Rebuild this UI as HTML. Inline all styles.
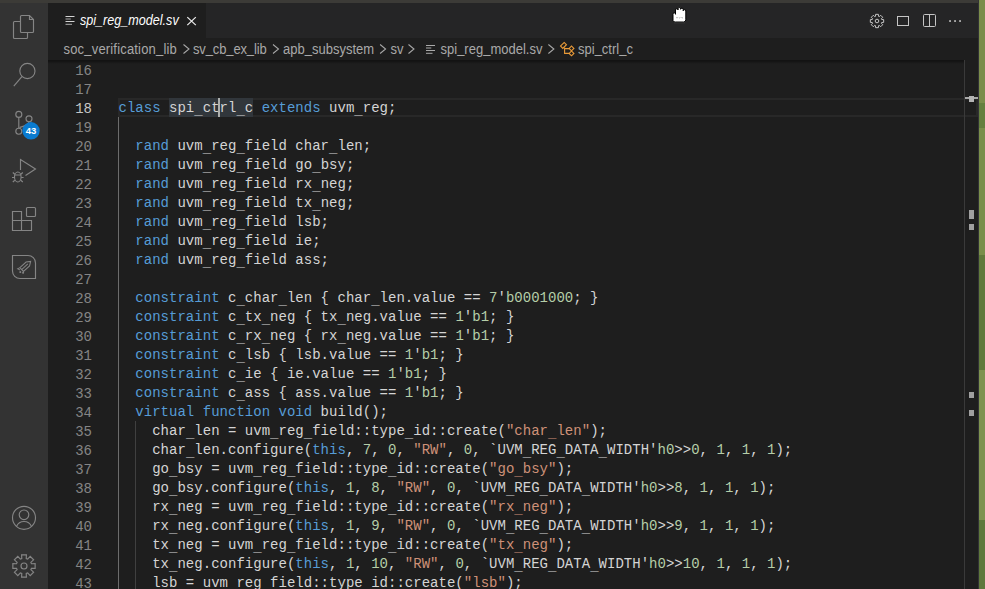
<!DOCTYPE html>
<html><head><meta charset="utf-8">
<style>
*{margin:0;padding:0;box-sizing:border-box}
html,body{width:985px;height:589px;overflow:hidden;background:#7b8f4a}
#green{left:979px;top:0;width:6px;height:589px;background:linear-gradient(#7b8d4b 0,#7b8d4b 103px,#65803f 103px,#65803f 128px,#7a8f4b 128px,#7a8f4b 255px,#617a3c 255px,#617a3c 370px,#7e9350 370px,#7e9350 520px,#5f783c 520px)}
body{position:relative;font-family:"Liberation Sans",sans-serif}
.abs{position:absolute}
#topstrip{left:0;top:0;width:978px;height:3px;background:#3c3b37}
#win{left:0;top:3px;width:979px;height:586px;background:#1e1e1e;overflow:hidden}
#winborder{left:978px;top:0;width:1px;height:589px;background:#323236}
#act{left:0;top:0;width:48px;height:586px;background:#333333}
#tabs{left:48px;top:0;width:930px;height:35px;background:#252526}
#tab{left:0;top:0;width:158px;height:35px;background:#1e1e1e}
#crumbs{left:48px;top:35px;width:930px;height:22px;background:#1e1e1e;color:#a9a9a9;font-size:13px}
#editor{left:48px;top:57px;width:930px;height:529px;background:#1e1e1e}
#shadow{left:0;top:0;width:916px;height:4px;background:linear-gradient(#121212 0px,#151515 1.5px,#1b1b1b 3px,#1e1e1e 4px);}
.ln{position:absolute;margin-top:1.5px;left:1px;width:43px;text-align:right;height:19px;line-height:19px;font-family:"Liberation Mono",monospace;font-size:14px;color:#858585}
.ln.cur{color:#c6c6c6}
.ln{transform:scaleY(1.1);transform-origin:0 14px}
.cl{position:absolute;margin-top:1px;left:70.5px;letter-spacing:0.02px;height:19px;line-height:19px;font-family:"Liberation Mono",monospace;font-size:14px;color:#d4d4d4;white-space:pre}
.cr{top:0px;line-height:23px;white-space:pre;font-size:13px;transform:scaleY(1.1);transform-origin:0 17px}
.u{font-style:normal;position:relative;top:2px}
.uc{font-style:normal;position:relative;top:-1px}
.k{color:#569cd6}.n{color:#b5cea8}.s{color:#ce9178}
.hl{}
#curline{left:70px;top:38px;width:860px;height:19px;border:2px solid #282828}
#cursor{left:170px;top:38px;width:2px;height:19px;background:#aeafad}
#guide1{left:70px;top:57px;width:1px;height:480px;background:#6c6c6c}
#guide2{left:87px;top:361px;width:1px;height:200px;background:#404040}
#ruler{left:916px;top:0;width:1px;height:529px;background:#3a3a3a}
.mk{position:absolute;left:921px;width:5px;background:#a0a0a0}
</style></head><body>
<div id="green" class="abs"></div>
<div id="topstrip" class="abs"></div>
<div id="win" class="abs">
  <div id="act" class="abs">
  <svg class="abs" style="left:0;top:-3px" width="48" height="589" viewBox="0 0 48 589" fill="none" stroke="#858585" stroke-width="1.15">
<path d="M21.5,15.5 H29.5 L33.5,19.5 V31.5 Q33.5,32.5 32.5,32.5 H21.5 Q20.5,32.5 20.5,31.5 V16.5 Q20.5,15.5 21.5,15.5 Z"/>
<path d="M29.5,15.5 V19.5 H33.5"/>
<path d="M20,21.5 H14.5 Q13.5,21.5 13.5,22.5 V37.5 Q13.5,38.5 14.5,38.5 H26.5 Q27.5,38.5 27.5,37.5 V33"/>
<circle cx="27.4" cy="71" r="7.6"/>
<path d="M21.9,76.6 L13.8,86.2"/>
<circle cx="18.8" cy="114.4" r="3"/>
<circle cx="29" cy="118.8" r="3"/>
<circle cx="18.8" cy="131.2" r="3"/>
<path d="M18.8,117.4 V128.2"/>
<path d="M29,121.8 C29,125 25,126 19.5,127.5"/>
<path d="M20.5,170 V159.5 L35.5,169 L25.5,175.5"/>
<ellipse cx="17.8" cy="177" rx="3.3" ry="5"/>
<path d="M14.6,175 H21 M12.8,172.5 L14.8,174.3 M22.8,172.5 L20.8,174.3 M12,177.5 H14.5 M21.1,177.5 H23.6 M12.8,182 L14.8,180.3 M22.8,182 L20.8,180.3"/>
<path d="M12.5,211.5 H21.5 V220.5 H31.5 V230.5 H12.5 Z M12.5,220.5 H21.5 M21.5,220.5 V230.5"/>
<rect x="26.5" y="207.5" width="9" height="9" rx="1"/>
<path d="M12.5,255.5 H28 A7.5,7.5 0 0 1 35.5,263 V278.5 H20 A7.5,7.5 0 0 1 12.5,271 Z"/>
<g transform="translate(25,266.5) rotate(-42)" stroke-width="1"><path d="M-4.5,-2.6 H3.8 L7.6,0 L3.8,2.6 H-4.5 Z M-4.5,0 H3.8 M-4.5,-2.6 L-7,-3.2 L-6,-0.5"/><circle cx="-7.2" cy="1" r="1" fill="#858585" stroke="none"/><circle cx="-5.6" cy="3.4" r="1" fill="#858585" stroke="none"/></g>
<circle cx="24" cy="517.8" r="11.5"/>
<circle cx="24" cy="514.8" r="4.8"/>
<path d="M16.5,526.5 C18,523 21,521.5 24,521.5 C27,521.5 30,523 31.5,526.5"/>
<path d="M21.77,558.53 L21.60,554.86 L26.40,554.86 L26.23,558.53 L27.70,559.14 L30.18,556.42 L33.58,559.82 L30.86,562.30 L31.47,563.77 L35.14,563.60 L35.14,568.40 L31.47,568.23 L30.86,569.70 L33.58,572.18 L30.18,575.58 L27.70,572.86 L26.23,573.47 L26.40,577.14 L21.60,577.14 L21.77,573.47 L20.30,572.86 L17.82,575.58 L14.42,572.18 L17.14,569.70 L16.53,568.23 L12.86,568.40 L12.86,563.60 L16.53,563.77 L17.14,562.30 L14.42,559.82 L17.82,556.42 L20.30,559.14 Z"/>
<circle cx="24" cy="566" r="3"/>
</svg>
<svg class="abs" style="left:0;top:-3px" width="48" height="589" viewBox="0 0 48 589">
<circle cx="31" cy="130.8" r="8.7" fill="#0a7bd0"/>
<text x="31" y="134.3" font-family="Liberation Sans" font-weight="bold" font-size="9.5" fill="#fff" text-anchor="middle">43</text>
</svg>
  </div>
  <div id="tabs" class="abs">
    <div id="tab" class="abs"><svg class="abs" style="left:0;top:0" width="158" height="34" viewBox="48 3 158 34">
<rect x="65.5" y="16" width="9" height="1" fill="#d4d4d4"/>
<rect x="65.5" y="18.5" width="5.3" height="1" fill="#a8a8a8"/>
<rect x="65.5" y="21" width="9" height="1" fill="#d4d4d4"/>
<rect x="65.5" y="23.8" width="6.5" height="1" fill="#b0b0b0"/>
<path d="M187.3,17.1 L195.8,25.1 M195.8,17.1 L187.3,25.1" stroke="#ececec" stroke-width="1.25"/>
</svg>
<div class="abs" style="left:32px;top:9.7px;font-style:italic;font-size:12.6px;color:#ffffff;line-height:17px;white-space:pre;transform:scaleY(1.12);transform-origin:0 13px">spi_reg_model.sv</div></div>
    <svg class="abs" style="left:0;top:0" width="930" height="34" viewBox="48 3 930 34" fill="none" stroke="#c5c5c5" stroke-width="1">
<path d="M875.49,16.34 L875.62,14.34 L878.38,14.34 L878.51,16.34 L879.22,16.63 L880.73,15.32 L882.68,17.27 L881.37,18.78 L881.66,19.49 L883.66,19.62 L883.66,22.38 L881.66,22.51 L881.37,23.22 L882.68,24.73 L880.73,26.68 L879.22,25.37 L878.51,25.66 L878.38,27.66 L875.62,27.66 L875.49,25.66 L874.78,25.37 L873.27,26.68 L871.32,24.73 L872.63,23.22 L872.34,22.51 L870.34,22.38 L870.34,19.62 L872.34,19.49 L872.63,18.78 L871.32,17.27 L873.27,15.32 L874.78,16.63 Z" stroke-linejoin="round"/>
<circle cx="877" cy="21" r="1.8"/>
<rect x="897.5" y="16.5" width="11" height="9"/>
<rect x="923.5" y="14.5" width="12" height="12" rx="1"/>
<path d="M929.5,14.5 V26.5"/>
<g fill="#c5c5c5" stroke="none"><rect x="949.2" y="20.2" width="1.7" height="1.7"/><rect x="954.2" y="20.2" width="1.7" height="1.7"/><rect x="959.2" y="20.2" width="1.7" height="1.7"/></g>
</svg>
  </div>
  <div id="crumbs" class="abs"><svg class="abs" style="left:0;top:0" width="930" height="22" viewBox="48 38 930 22" fill="none" stroke="#a8a8a8" stroke-width="1.05"><path d="M183.5,44.5 L189.0,49 L183.5,53.5"/><path d="M273.0,44.5 L278.5,49 L273.0,53.5"/><path d="M380.1,44.5 L385.6,49 L380.1,53.5"/><path d="M408.5,44.5 L414.0,49 L408.5,53.5"/><path d="M548.4,44.5 L553.9,49 L548.4,53.5"/>

<g fill="#a9a9a9" stroke="none"><rect x="426" y="45" width="9" height="1"/><rect x="426" y="47.5" width="5.3" height="1"/><rect x="426" y="50" width="9" height="1"/><rect x="426" y="52.8" width="6.5" height="1"/></g>
<g stroke="#e99a38" stroke-width="1.1" fill="none"><rect x="-2.6" y="-1.6" width="5.2" height="3.2" transform="translate(563.5,45.4) rotate(-45)"/><rect x="-1.7" y="-1.7" width="3.4" height="3.4" transform="translate(571.5,48.4) rotate(45)"/><rect x="-1.7" y="-1.7" width="3.4" height="3.4" transform="translate(571.5,53.4) rotate(45)"/><path d="M564.6,48.6 H569.2 M564.6,47.5 V53.4 H569.2"/></g>
</svg>
<span class="abs cr" style="left:15.5px;letter-spacing:0.18px">soc<i class="uc">_</i>verification<i class="uc">_</i>lib</span>
<span class="abs cr" style="left:145px;letter-spacing:-0.14px">sv<i class="uc">_</i>cb<i class="uc">_</i>ex<i class="uc">_</i>lib</span>
<span class="abs cr" style="left:235px">apb<i class="uc">_</i>subsystem</span>
<span class="abs cr" style="left:342.5px">sv</span>
<span class="abs cr" style="left:392.5px">spi<i class="uc">_</i>reg<i class="uc">_</i>model.sv</span>
<span class="abs cr" style="left:530px">spi<i class="uc">_</i>ctrl<i class="uc">_</i>c</span></div>
  <div id="editor" class="abs">
    <div id="curline" class="abs"></div>
    <div class="abs" style="left:121px;top:38px;width:84px;height:19px;background:#31363b"></div>
    <div id="guide1" class="abs"></div>
    <div id="guide2" class="abs"></div>
    <div class="ln" style="top:0px">16</div>
<div class="cl" style="top:0px"></div>
<div class="ln" style="top:19px">17</div>
<div class="cl" style="top:19px"></div>
<div class="ln cur" style="top:38px">18</div>
<div class="cl" style="top:38px"><span class="k">class</span> <span class="hl">spi<i class="u">_</i>ctrl<i class="u">_</i>c</span> <span class="k">extends</span> uvm<i class="u">_</i>reg;</div>
<div class="ln" style="top:57px">19</div>
<div class="cl" style="top:57px"></div>
<div class="ln" style="top:76px">20</div>
<div class="cl" style="top:76px">  <span class="k">rand</span> uvm<i class="u">_</i>reg<i class="u">_</i>field char<i class="u">_</i>len;</div>
<div class="ln" style="top:95px">21</div>
<div class="cl" style="top:95px">  <span class="k">rand</span> uvm<i class="u">_</i>reg<i class="u">_</i>field go<i class="u">_</i>bsy;</div>
<div class="ln" style="top:114px">22</div>
<div class="cl" style="top:114px">  <span class="k">rand</span> uvm<i class="u">_</i>reg<i class="u">_</i>field rx<i class="u">_</i>neg;</div>
<div class="ln" style="top:133px">23</div>
<div class="cl" style="top:133px">  <span class="k">rand</span> uvm<i class="u">_</i>reg<i class="u">_</i>field tx<i class="u">_</i>neg;</div>
<div class="ln" style="top:152px">24</div>
<div class="cl" style="top:152px">  <span class="k">rand</span> uvm<i class="u">_</i>reg<i class="u">_</i>field lsb;</div>
<div class="ln" style="top:171px">25</div>
<div class="cl" style="top:171px">  <span class="k">rand</span> uvm<i class="u">_</i>reg<i class="u">_</i>field ie;</div>
<div class="ln" style="top:190px">26</div>
<div class="cl" style="top:190px">  <span class="k">rand</span> uvm<i class="u">_</i>reg<i class="u">_</i>field ass;</div>
<div class="ln" style="top:209px">27</div>
<div class="cl" style="top:209px"></div>
<div class="ln" style="top:228px">28</div>
<div class="cl" style="top:228px">  <span class="k">constraint</span> c<i class="u">_</i>char<i class="u">_</i>len { char<i class="u">_</i>len.value == <span class="n">7</span>&#x27;<span class="n">b0001000</span>; }</div>
<div class="ln" style="top:247px">29</div>
<div class="cl" style="top:247px">  <span class="k">constraint</span> c<i class="u">_</i>tx<i class="u">_</i>neg { tx<i class="u">_</i>neg.value == <span class="n">1</span>&#x27;<span class="n">b1</span>; }</div>
<div class="ln" style="top:266px">30</div>
<div class="cl" style="top:266px">  <span class="k">constraint</span> c<i class="u">_</i>rx<i class="u">_</i>neg { rx<i class="u">_</i>neg.value == <span class="n">1</span>&#x27;<span class="n">b1</span>; }</div>
<div class="ln" style="top:285px">31</div>
<div class="cl" style="top:285px">  <span class="k">constraint</span> c<i class="u">_</i>lsb { lsb.value == <span class="n">1</span>&#x27;<span class="n">b1</span>; }</div>
<div class="ln" style="top:304px">32</div>
<div class="cl" style="top:304px">  <span class="k">constraint</span> c<i class="u">_</i>ie { ie.value == <span class="n">1</span>&#x27;<span class="n">b1</span>; }</div>
<div class="ln" style="top:323px">33</div>
<div class="cl" style="top:323px">  <span class="k">constraint</span> c<i class="u">_</i>ass { ass.value == <span class="n">1</span>&#x27;<span class="n">b1</span>; }</div>
<div class="ln" style="top:342px">34</div>
<div class="cl" style="top:342px">  <span class="k">virtual</span> <span class="k">function</span> <span class="k">void</span> build();</div>
<div class="ln" style="top:361px">35</div>
<div class="cl" style="top:361px">    char<i class="u">_</i>len = uvm<i class="u">_</i>reg<i class="u">_</i>field::type<i class="u">_</i>id::create(<span class="s">&quot;char<i class="u">_</i>len&quot;</span>);</div>
<div class="ln" style="top:380px">36</div>
<div class="cl" style="top:380px">    char<i class="u">_</i>len.configure(<span class="k">this</span>, <span class="n">7</span>, <span class="n">0</span>, <span class="s">&quot;RW&quot;</span>, <span class="n">0</span>, `UVM<i class="u">_</i>REG<i class="u">_</i>DATA<i class="u">_</i>WIDTH&#x27;<span class="n">h0</span>&gt;&gt;<span class="n">0</span>, <span class="n">1</span>, <span class="n">1</span>, <span class="n">1</span>);</div>
<div class="ln" style="top:399px">37</div>
<div class="cl" style="top:399px">    go<i class="u">_</i>bsy = uvm<i class="u">_</i>reg<i class="u">_</i>field::type<i class="u">_</i>id::create(<span class="s">&quot;go<i class="u">_</i>bsy&quot;</span>);</div>
<div class="ln" style="top:418px">38</div>
<div class="cl" style="top:418px">    go<i class="u">_</i>bsy.configure(<span class="k">this</span>, <span class="n">1</span>, <span class="n">8</span>, <span class="s">&quot;RW&quot;</span>, <span class="n">0</span>, `UVM<i class="u">_</i>REG<i class="u">_</i>DATA<i class="u">_</i>WIDTH&#x27;<span class="n">h0</span>&gt;&gt;<span class="n">8</span>, <span class="n">1</span>, <span class="n">1</span>, <span class="n">1</span>);</div>
<div class="ln" style="top:437px">39</div>
<div class="cl" style="top:437px">    rx<i class="u">_</i>neg = uvm<i class="u">_</i>reg<i class="u">_</i>field::type<i class="u">_</i>id::create(<span class="s">&quot;rx<i class="u">_</i>neg&quot;</span>);</div>
<div class="ln" style="top:456px">40</div>
<div class="cl" style="top:456px">    rx<i class="u">_</i>neg.configure(<span class="k">this</span>, <span class="n">1</span>, <span class="n">9</span>, <span class="s">&quot;RW&quot;</span>, <span class="n">0</span>, `UVM<i class="u">_</i>REG<i class="u">_</i>DATA<i class="u">_</i>WIDTH&#x27;<span class="n">h0</span>&gt;&gt;<span class="n">9</span>, <span class="n">1</span>, <span class="n">1</span>, <span class="n">1</span>);</div>
<div class="ln" style="top:475px">41</div>
<div class="cl" style="top:475px">    tx<i class="u">_</i>neg = uvm<i class="u">_</i>reg<i class="u">_</i>field::type<i class="u">_</i>id::create(<span class="s">&quot;tx<i class="u">_</i>neg&quot;</span>);</div>
<div class="ln" style="top:494px">42</div>
<div class="cl" style="top:494px">    tx<i class="u">_</i>neg.configure(<span class="k">this</span>, <span class="n">1</span>, <span class="n">10</span>, <span class="s">&quot;RW&quot;</span>, <span class="n">0</span>, `UVM<i class="u">_</i>REG<i class="u">_</i>DATA<i class="u">_</i>WIDTH&#x27;<span class="n">h0</span>&gt;&gt;<span class="n">10</span>, <span class="n">1</span>, <span class="n">1</span>, <span class="n">1</span>);</div>
<div class="ln" style="top:513px">43</div>
<div class="cl" style="top:513px">    lsb = uvm<i class="u">_</i>reg<i class="u">_</i>field::type<i class="u">_</i>id::create(<span class="s">&quot;lsb&quot;</span>);</div>
    <div id="cursor" class="abs"></div>
    <div id="ruler" class="abs"></div>
    <div class="mk" style="top:150px;height:9px"></div>
<div class="mk" style="top:164px;height:6px"></div>
<div class="mk" style="top:332px;height:6px"></div>
<div class="mk" style="top:350px;height:6px"></div>
<div class="abs" style="left:917px;top:37.3px;width:13px;height:1.6px;background:#a8a8a8"></div>
<div class="abs" style="left:921px;top:36px;width:5px;height:6px;background:#b4b4b4"></div>

    <div id="shadow" class="abs"></div>
  </div>
</div>
<div id="winborder" class="abs"></div>
<svg class="abs" style="left:668px;top:4px" width="22" height="22" viewBox="668 4 22 22">
<path d="M673,20.5 V14.3 Q673,12.8 674.3,12.8 Q675.5,12.8 675.5,14.3 V10 Q675.5,8.7 676.8,8.7 Q678,8.7 678,10 V8.8 Q678,7.6 679.3,7.6 Q680.6,7.6 680.6,8.8 V9.3 Q680.6,8.2 681.9,8.2 Q683.2,8.2 683.2,9.5 V10.8 Q683.2,9.7 684.5,9.7 Q685.8,9.7 685.8,11 V19.8 Q685.8,22 683.5,22 H675.3 Q673,22 673,20.5 Z" fill="#ffffff" stroke="#000" stroke-width="1"/>
<path d="M676.2,17.5 Q677,18.4 677.8,17.5 M678.8,17.5 Q679.6,18.4 680.4,17.5 M681.4,17.5 Q682.2,18.4 683,17.5" fill="none" stroke="#8a8a8a" stroke-width="0.7"/>
<path d="M674,22.8 H685" stroke="#555" stroke-width="0.8" opacity="0.6"/>
</svg>

</body></html>
